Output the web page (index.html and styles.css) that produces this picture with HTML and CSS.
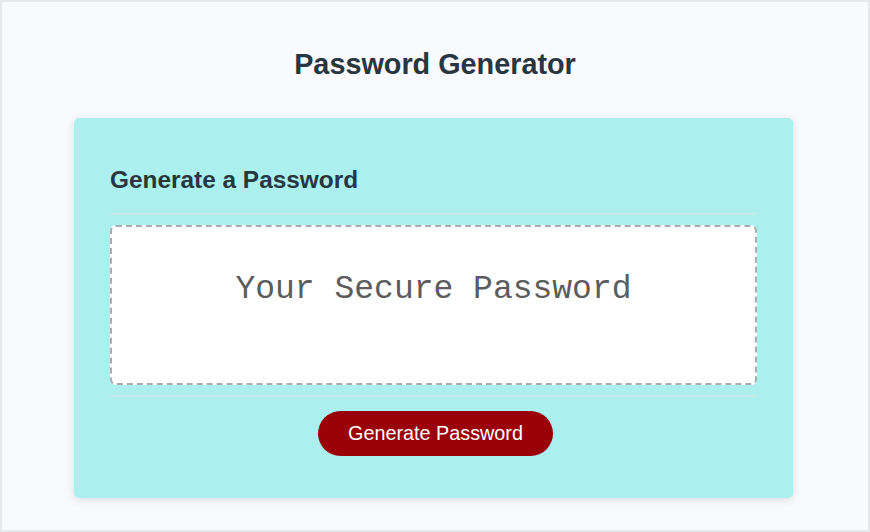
FILE: index.html
```html
<!DOCTYPE html>
<html>
<head>
<meta charset="utf-8">
<link rel="stylesheet" href="styles.css">
</head>
<body>
<div class="frame">
  <h1 class="title">Password Generator</h1>
  <div class="card">
    <div class="card-header">
      <h2>Generate a Password</h2>
    </div>
    <div class="card-body">
      <textarea class="password" readonly placeholder="Your Secure Password"></textarea>
    </div>
    <div class="card-footer">
      <button class="btn">Generate Password</button>
    </div>
  </div>
</div>
</body>
</html>
```
FILE: styles.css
```css
html, body {
  margin: 0;
  padding: 0;
}
body {
  width: 870px;
  height: 532px;
  font-family: "Liberation Sans", Arial, sans-serif;
  background: #f9fafe;
}
.frame {
  box-sizing: border-box;
  width: 870px;
  height: 532px;
  border: 2px solid #e6e8ec;
  background: #f9fafe;
  padding-top: 44px;
  display: flex;
  flex-direction: column;
  align-items: center;
}
.title {
  margin: 0;
  font-size: 28.8px;
  line-height: 36px;
  font-weight: bold;
  color: #283640;
}
.card {
  box-sizing: border-box;
  margin-top: 36px;
  width: 719px;
  margin-left: -3px;
  background: #abf0ee;
  border-radius: 5px;
  box-shadow: 0 2px 8px rgba(0, 0, 0, 0.12);
  padding: 0 36px 42px;
}
.card-header {
  padding-top: 46px;
  padding-bottom: 17px;
  border-bottom: 2px solid #c5e8e9;
}
.card-header h2 {
  margin: 0;
  font-size: 24.4px;
  line-height: 32px;
  font-weight: bold;
  color: #283640;
}
.card-body {
  padding: 10px 0 10px;
}
.password {
  display: block;
  box-sizing: border-box;
  width: 100%;
  height: 160px;
  border: 2px dashed #a7adb3;
  border-radius: 6px;
  background: #ffffff;
  resize: none;
  font-family: "Liberation Mono", "Courier New", monospace;
  font-size: 33px;
  text-align: center;
  padding-top: 44px;
  color: #555;
  outline: none;
}
.password::placeholder {
  color: #5c5c5c;
  opacity: 1;
}
.card-footer {
  border-top: 2px solid #c5e8e9;
  padding-top: 14px;
  display: flex;
  justify-content: center;
}
.btn {
  width: 235px;
  height: 45px;
  margin-left: 4px;
  border: none;
  border-radius: 23px;
  background: #9b0009;
  color: #ffffff;
  font-family: "Liberation Sans", Arial, sans-serif;
  font-size: 19.8px;
  cursor: pointer;
}
```
